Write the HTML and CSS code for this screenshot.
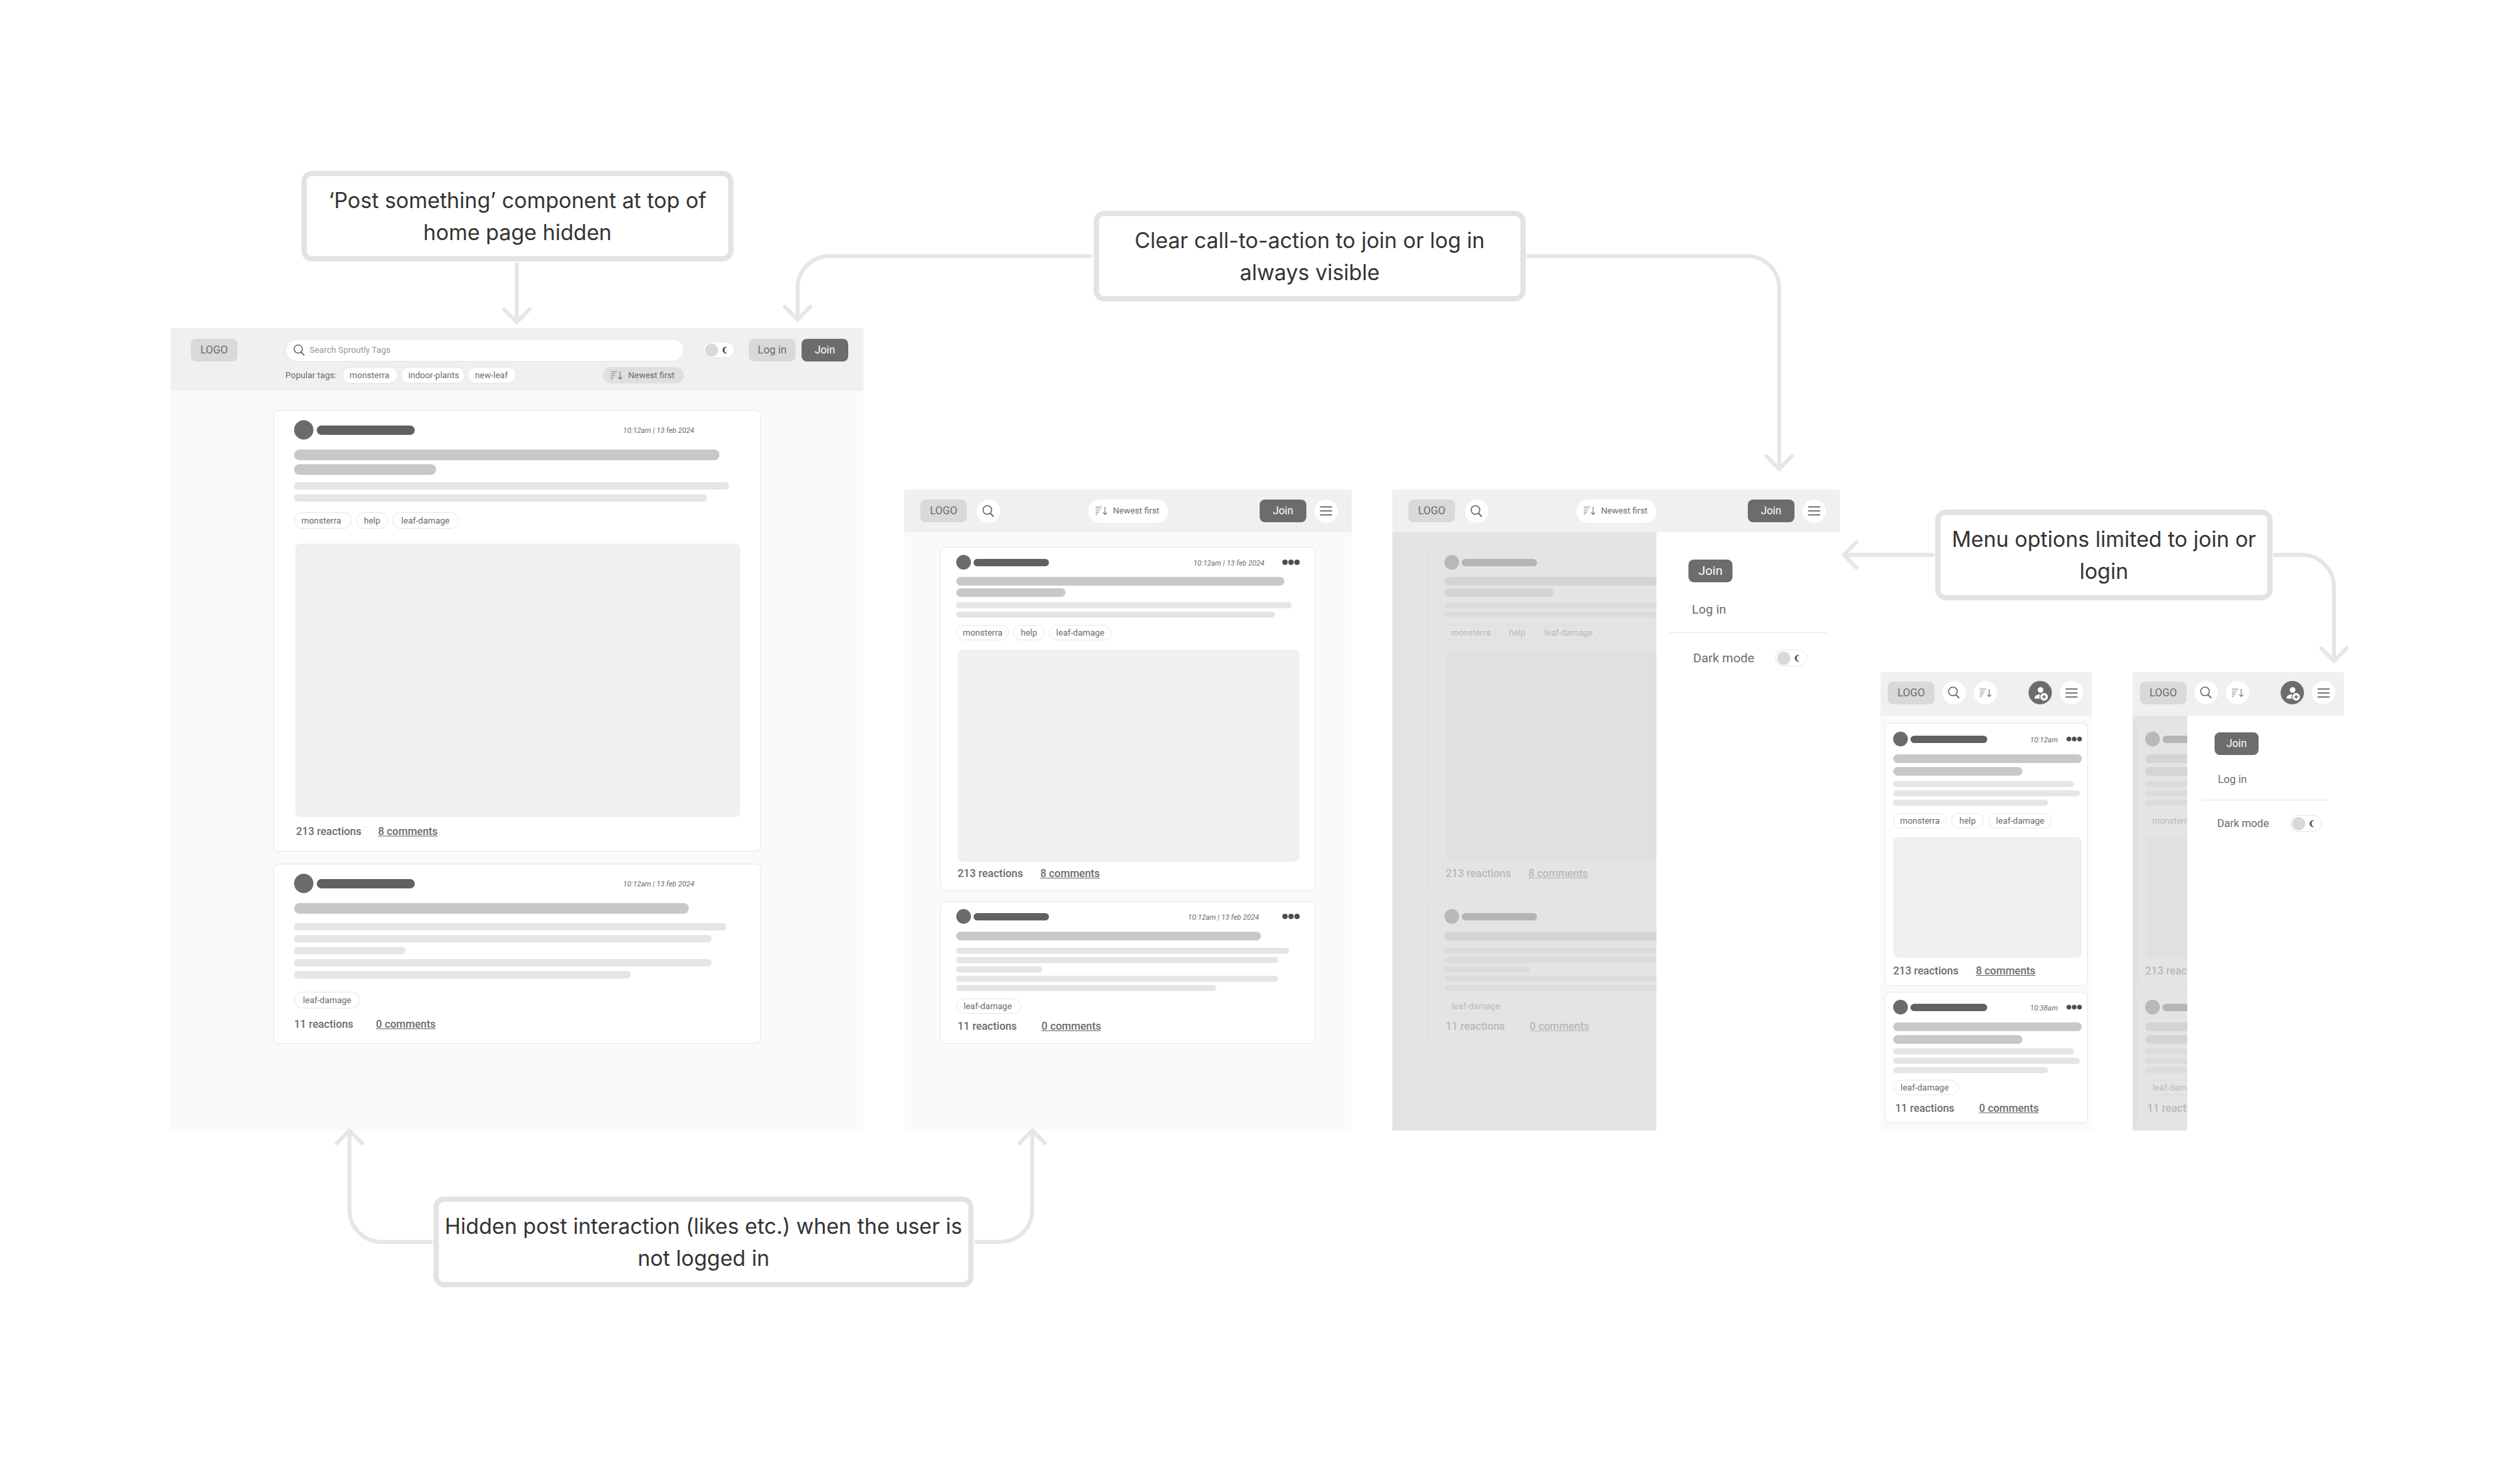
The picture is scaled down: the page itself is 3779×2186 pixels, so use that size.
FILE: index.html
```html
<!DOCTYPE html>
<html lang="en">
<head>
<meta charset="utf-8">
<title>Sproutly wireframes: logged-out views</title>
<link rel="stylesheet" href="styles.css">
</head>
<body>
<svg class="sprite" aria-hidden="true">
  <symbol id="i-search" viewBox="0 0 20 20"><circle cx="8" cy="8" r="6.8" fill="none" stroke="currentColor" stroke-width="1.5"/><path d="M12.8 13.2 18 18.6" fill="none" stroke="currentColor" stroke-width="1.8"/></symbol>
  <symbol id="i-sort" viewBox="0 0 18 14"><path d="M0 1.2H9.500M0 4H7.500M0 6.800H6M0 9.600H4.500M0 12.400H2.500" fill="none" stroke="#9a9a9a" stroke-width="1.2"/><path d="M14 1V12.200M11 9.400 14 12.400 17 9.400" fill="none" stroke="currentColor" stroke-width="1.2"/></symbol>
  <symbol id="i-menu" viewBox="0 0 18 14"><path d="M0 1H18M0 7H18M0 13H18" fill="none" stroke="currentColor" stroke-width="1.500"/></symbol>
  <symbol id="i-moon" viewBox="0 0 8 12"><path d="M7.600 1.200A5.200 5.200 0 1 0 7.600 10.800A4.850 4.850 0 0 1 7.600 1.200Z" fill="currentColor"/></symbol>
  <symbol id="i-dots" viewBox="0 0 26 8"><circle cx="4" cy="4" r="4"/><circle cx="13" cy="4" r="4"/><circle cx="22" cy="4" r="4"/></symbol>
  <symbol id="i-join" viewBox="0 0 24 24"><circle cx="12" cy="7.500" r="4.200" fill="#fff"/><path d="M3.300 20.500V18.500C3.300 15.800 7.500 14 12 14L16 15V20.500Z" fill="#fff"/><circle cx="17.300" cy="17.800" r="7" fill="#6c6c6c"/><circle cx="17.300" cy="17.800" r="5.700" fill="#fff"/><path d="M17.300 15.100V20.500M14.600 17.800H20" stroke="#6c6c6c" stroke-width="1.800"/></symbol>
</svg>

<main class="board">
  <section class="frames">

    <article class="frame desktop">
      <header class="bar">
        <a class="logo" href="#">LOGO</a>
        <div class="find">
          <label class="search"><svg class="ico-search"><use href="#i-search"/></svg><input type="search" placeholder="Search Sproutly Tags" aria-label="Search Sproutly Tags"></label>
          <div class="popular">
            <span>Popular tags:</span>
            <ul class="tags">
              <li class="tag tag-start" style="width:84px">monsterra</li>
              <li class="tag tag-start" style="width:96px">indoor-plants</li>
              <li class="tag tag-start" style="width:73px">new-leaf</li>
            </ul>
            <button class="sort" type="button"><svg class="ico-sort"><use href="#i-sort"/></svg>Newest first</button>
          </div>
        </div>
        <label class="toggle"><input type="checkbox" aria-label="Dark mode"><svg class="ico-moon"><use href="#i-moon"/></svg></label>
        <div class="actions">
          <button class="btn btn-quiet" type="button">Log in</button>
          <button class="btn" type="button">Join</button>
        </div>
      </header>
      <div class="feed">
        <section class="post">
          <div class="head"><i class="avatar"></i><i class="name"></i><time>10:12am | 13 feb 2024</time></div>
          <div class="titles"><i style="width:638px"></i><i style="width:213px"></i></div>
          <div class="lines"><i style="width:652px"></i><i style="width:619px"></i></div>
          <ul class="tags"><li class="tag tag-start" style="width:87px">monsterra</li><li class="tag" style="width:48px">help</li><li class="tag" style="width:100px">leaf-damage</li></ul>
          <div class="photo"></div>
          <div class="stats"><span>213 reactions</span><a href="#">8 comments</a></div>
        </section>
        <section class="post short">
          <div class="head"><i class="avatar"></i><i class="name"></i><time>10:12am | 13 feb 2024</time></div>
          <div class="titles"><i style="width:592px"></i></div>
          <div class="lines"><i style="width:648px"></i><i style="width:626px"></i><i style="width:167px"></i><i style="width:626px"></i><i style="width:505px"></i></div>
          <ul class="tags"><li class="tag" style="width:99px">leaf-damage</li></ul>
          <div class="stats"><span>11 reactions</span><a href="#">0 comments</a></div>
        </section>
      </div>
    </article>

    <article class="frame tablet">
      <header class="bar">
        <a class="logo" href="#">LOGO</a>
        <button class="round" type="button" aria-label="Search"><svg class="ico-search"><use href="#i-search"/></svg></button>
        <button class="sort" type="button"><svg class="ico-sort"><use href="#i-sort"/></svg>Newest first</button>
        <button class="btn" type="button">Join</button>
        <button class="round" type="button" aria-label="Menu"><svg class="ico-menu"><use href="#i-menu"/></svg></button>
      </header>
      <div class="feed">
        <section class="post">
          <div class="head"><i class="avatar"></i><i class="name"></i><time>10:12am | 13 feb 2024</time><svg class="ico-dots"><use href="#i-dots"/></svg></div>
          <div class="titles"><i style="width:492px"></i><i style="width:164px"></i></div>
          <div class="lines"><i style="width:503px"></i><i style="width:478px"></i></div>
          <ul class="tags"><li class="tag" style="width:79px">monsterra</li><li class="tag" style="width:48px">help</li><li class="tag" style="width:94px">leaf-damage</li></ul>
          <div class="photo"></div>
          <div class="stats"><span>213 reactions</span><a href="#">8 comments</a></div>
        </section>
        <section class="post short">
          <div class="head"><i class="avatar"></i><i class="name"></i><time>10:12am | 13 feb 2024</time><svg class="ico-dots"><use href="#i-dots"/></svg></div>
          <div class="titles"><i style="width:457px"></i></div>
          <div class="lines"><i style="width:499px"></i><i style="width:483px"></i><i style="width:129px"></i><i style="width:483px"></i><i style="width:390px"></i></div>
          <ul class="tags"><li class="tag tag-start" style="width:98px">leaf-damage</li></ul>
          <div class="stats"><span>11 reactions</span><a href="#">0 comments</a></div>
        </section>
      </div>
    </article>

    <article class="frame tablet">
      <header class="bar">
        <a class="logo" href="#">LOGO</a>
        <button class="round" type="button" aria-label="Search"><svg class="ico-search"><use href="#i-search"/></svg></button>
        <button class="sort" type="button"><svg class="ico-sort"><use href="#i-sort"/></svg>Newest first</button>
        <button class="btn" type="button">Join</button>
        <button class="round" type="button" aria-label="Menu"><svg class="ico-menu"><use href="#i-menu"/></svg></button>
      </header>
      <div class="feed">
        <section class="post">
          <div class="head"><i class="avatar"></i><i class="name"></i></div>
          <div class="titles"><i style="width:492px"></i><i style="width:164px"></i></div>
          <div class="lines"><i style="width:503px"></i><i style="width:478px"></i></div>
          <ul class="tags"><li class="tag" style="width:79px">monsterra</li><li class="tag" style="width:48px">help</li><li class="tag" style="width:94px">leaf-damage</li></ul>
          <div class="photo"></div>
          <div class="stats"><span>213 reactions</span><a href="#">8 comments</a></div>
        </section>
        <section class="post short">
          <div class="head"><i class="avatar"></i><i class="name"></i></div>
          <div class="titles"><i style="width:457px"></i></div>
          <div class="lines"><i style="width:499px"></i><i style="width:483px"></i><i style="width:129px"></i><i style="width:483px"></i><i style="width:390px"></i></div>
          <ul class="tags"><li class="tag tag-start" style="width:98px">leaf-damage</li></ul>
          <div class="stats"><span>11 reactions</span><a href="#">0 comments</a></div>
        </section>
        <div class="scrim">
          <nav class="drawer">
            <button class="btn" type="button">Join</button>
            <a class="login" href="#">Log in</a>
            <hr>
            <div class="mode"><label for="dark-tablet">Dark mode</label><span class="toggle"><input id="dark-tablet" type="checkbox"><svg class="ico-moon"><use href="#i-moon"/></svg></span></div>
          </nav>
        </div>
      </div>
    </article>

    <article class="frame mobile">
      <header class="bar">
        <a class="logo" href="#">LOGO</a>
        <button class="round" type="button" aria-label="Search"><svg class="ico-search"><use href="#i-search"/></svg></button>
        <button class="round" type="button" aria-label="Sort"><svg class="ico-sort"><use href="#i-sort"/></svg></button>
        <button class="round round-dark" type="button" aria-label="Join"><svg class="ico-join"><use href="#i-join"/></svg></button>
        <button class="round" type="button" aria-label="Menu"><svg class="ico-menu"><use href="#i-menu"/></svg></button>
      </header>
      <div class="feed">
        <section class="post">
          <div class="head"><i class="avatar"></i><i class="name"></i><time>10:12am</time><svg class="ico-dots"><use href="#i-dots"/></svg></div>
          <div class="titles"><i style="width:283px"></i><i style="width:194px"></i></div>
          <div class="lines"><i style="width:271px"></i><i style="width:280px"></i><i style="width:232px"></i></div>
          <ul class="tags"><li class="tag" style="width:80px">monsterra</li><li class="tag" style="width:49px">help</li><li class="tag" style="width:95px">leaf-damage</li></ul>
          <div class="photo"></div>
          <div class="stats"><span>213 reactions</span><a href="#">8 comments</a></div>
        </section>
        <section class="post short">
          <div class="head"><i class="avatar"></i><i class="name"></i><time>10:38am</time><svg class="ico-dots"><use href="#i-dots"/></svg></div>
          <div class="titles"><i style="width:283px"></i><i style="width:194px"></i></div>
          <div class="lines"><i style="width:271px"></i><i style="width:280px"></i><i style="width:232px"></i></div>
          <ul class="tags"><li class="tag tag-start" style="width:98px">leaf-damage</li></ul>
          <div class="stats"><span>11 reactions</span><a href="#">0 comments</a></div>
        </section>
      </div>
    </article>

    <article class="frame mobile">
      <header class="bar">
        <a class="logo" href="#">LOGO</a>
        <button class="round" type="button" aria-label="Search"><svg class="ico-search"><use href="#i-search"/></svg></button>
        <button class="round" type="button" aria-label="Sort"><svg class="ico-sort"><use href="#i-sort"/></svg></button>
        <button class="round round-dark" type="button" aria-label="Join"><svg class="ico-join"><use href="#i-join"/></svg></button>
        <button class="round" type="button" aria-label="Menu"><svg class="ico-menu"><use href="#i-menu"/></svg></button>
      </header>
      <div class="feed">
        <section class="post">
          <div class="head"><i class="avatar"></i><i class="name"></i></div>
          <div class="titles"><i style="width:283px"></i><i style="width:194px"></i></div>
          <div class="lines"><i style="width:271px"></i><i style="width:280px"></i><i style="width:232px"></i></div>
          <ul class="tags"><li class="tag" style="width:80px">monsterra</li></ul>
          <div class="photo"></div>
          <div class="stats"><span>213 reactions</span></div>
        </section>
        <section class="post short">
          <div class="head"><i class="avatar"></i><i class="name"></i></div>
          <div class="titles"><i style="width:283px"></i><i style="width:194px"></i></div>
          <div class="lines"><i style="width:271px"></i><i style="width:280px"></i><i style="width:232px"></i></div>
          <ul class="tags"><li class="tag tag-start" style="width:98px">leaf-damage</li></ul>
          <div class="stats"><span>11 reactions</span></div>
        </section>
        <div class="scrim">
          <nav class="drawer">
            <button class="btn" type="button">Join</button>
            <a class="login" href="#">Log in</a>
            <hr>
            <div class="mode"><label for="dark-mobile">Dark mode</label><span class="toggle"><input id="dark-mobile" type="checkbox"><svg class="ico-moon"><use href="#i-moon"/></svg></span></div>
          </nav>
        </div>
      </div>
    </article>
  </section>

  <svg class="arrows" aria-hidden="true">
    <path d="M775 396V480"/><path class="tip" d="M756 464 775 483 794 464"/>
    <path d="M1635 384H1244A48 48 0 0 0 1196 432V476"/><path class="tip" d="M1177 460 1196 479 1215 460"/>
    <path d="M2292 384H2620A48 48 0 0 1 2668 432V700"/><path class="tip" d="M2649 684 2668 703 2687 684"/>
    <path d="M2898 832H2768"/><path class="tip" d="M2784 813 2765 832 2784 851"/>
    <path d="M3412 832H3452A48 48 0 0 1 3500 880V988"/><path class="tip" d="M3481 972 3500 991 3519 972"/>
    <path d="M646 1862H572A48 48 0 0 1 524 1814V1698"/><path class="tip" d="M505 1714 524 1695 543 1714"/>
    <path d="M1464 1862H1500A48 48 0 0 0 1548 1814V1698"/><path class="tip" d="M1529 1714 1548 1695 1567 1714"/>
  </svg>

  <p class="note note-post">‘Post something’ component at top of home page hidden</p>
  <p class="note note-cta">Clear call-to-action to join or log in always visible</p>
  <p class="note note-menu">Menu options limited to join or login</p>
  <p class="note note-likes">Hidden post interaction (likes etc.) when the user is not logged in</p>
</main>
</body>
</html>
```
FILE: styles.css
```css
*, *::before, *::after { box-sizing: border-box; }
body { margin: 0; background: #fff; color: #6b6b6b; font: 16px/24px Roboto, sans-serif; }
ul { list-style: none; margin: 0; padding: 0; }
a { color: inherit; text-decoration: none; }
i { display: block; font-style: normal; }
button, input { font: inherit; color: inherit; margin: 0; padding: 0; border: 0; background: none; }
svg { display: block; flex: none; }
.sprite { position: absolute; width: 0; height: 0; }

/* Board: screens in a row, annotations placed freely on top */
.board { position: relative; min-height: 100vh; overflow: hidden; }
.frames { display: flex; align-items: flex-end; gap: 61px; padding: 492px 256px 0; }
.frame { flex: none; background: #fafafa; }
.arrows { position: absolute; inset: 0; width: 100%; height: 100%; fill: none; stroke: #e6e6e6; stroke-width: 6; stroke-linecap: round; }
.arrows .tip { stroke-linejoin: miter; }
.note { position: absolute; width: 648px; margin: 0; padding: 13px 8px 11px; border: 8px solid #e3e3e3; border-radius: 16px; background: #fff; color: #333; font: 32px/48px Inter, sans-serif; text-align: center; }
.note-post { left: 452px; top: 256px; }
.note-cta { left: 1640px; top: 316px; }
.note-menu { left: 2902px; top: 764px; width: 506px; }
.note-likes { left: 650px; top: 1794px; width: 810px; }

/* Screen sizes */
.desktop {
  width: 1039px; --card: 731px; --top: 29px; --end: 130px; --between: 18px;
  --pad: 14px 30px 17px; --avatar: 29px; --name: 147px; --name-h: 14px; --name-gap: 5px;
  --title-h: 16px; --title-gap: 6px; --line-h: 11px; --line-gap: 7px; --tag-h: 25px; --tag-gap: 6px;
  --to-title: 15px; --to-lines: 11px; --to-tags: 16px; --to-photo: 22px; --to-stats: 10px;
  --photo: 410px; --photo-in: 2px; --stats-in: 3px; --stats-gap: 25px;
}
.desktop .short { --pad: 14px 30px 16px; --to-lines: 14px; --to-tags: 20px; --to-stats: 12px; --stats-in: 0px; --stats-gap: 34px; }
.tablet {
  width: 671px; --card: 563px; --top: 22px; --end: 130px; --between: 15px;
  --pad: 11px 23px 13px; --avatar: 22px; --name: 113px; --name-h: 11px; --name-gap: 4px;
  --title-h: 13px; --title-gap: 4px; --line-h: 9px; --line-gap: 5px; --tag-h: 23px; --tag-gap: 6px;
  --to-title: 11px; --to-lines: 8px; --to-tags: 11px; --to-photo: 14px; --to-stats: 6px;
  --photo: 318px; --photo-in: 2px; --stats-in: 2px; --stats-gap: 26px; --dots: 26px; --dots-gap: 27px;
}
.tablet .short { --to-title: 12px; --to-lines: 11px; --to-stats: 7px; --stats-gap: 37px; --dots-gap: 35px; }
.mobile {
  width: 317px; --card: 305px; --top: 11px; --end: 11px; --between: 9px;
  --pad: 12px 8px 9px 12px; --avatar: 22px; --name: 115px; --name-h: 11px; --name-gap: 4px;
  --title-h: 13px; --title-gap: 6px; --line-h: 9px; --line-gap: 5px; --tag-h: 23px; --tag-gap: 7px;
  --to-title: 12px; --to-lines: 8px; --to-tags: 11px; --to-photo: 13px; --to-stats: 8px;
  --photo: 181px; --photo-in: 0px; --stats-in: 0px; --stats-gap: 26px; --dots: 23px; --dots-gap: 13px;
}
.mobile .short { --pad: 11px 8px 9px 12px; --to-lines: 7px; --to-tags: 10px; --stats-in: 3px; --stats-gap: 37px; }

/* Top bar */
.bar { display: flex; align-items: center; background: #f0f0f0; }
.logo, .btn { flex: none; width: 70px; height: 34px; border-radius: 8px; line-height: 34px; text-align: center; }
.logo { background: #d9d9d9; }
.btn { background: #6c6c6c; color: #fff; }
.btn-quiet { background: #d9d9d9; color: #6b6b6b; }
.desktop .bar { align-items: flex-start; height: 94px; padding: 16px 22px 0 30px; }
.find { width: 598px; margin: 0 28px 0 72px; }
.search { display: flex; align-items: center; gap: 6px; height: 34px; padding: 0 11px; border: 1px solid #e5e5e5; border-radius: 17px; background: #fff; }
.search input { flex: 1; outline: 0; font-size: 13px; }
.search input::placeholder { color: #999; opacity: 1; }
.search .ico-search { width: 18px; height: 18px; }
.popular { display: flex; align-items: center; gap: 9px; margin-top: 8px; font-size: 13px; }
.popular .tags { gap: 4px; }
.actions { display: flex; gap: 9px; margin-left: 21px; }
.desktop .bar .toggle { margin-top: 4px; }
.sort { display: flex; align-items: center; gap: 8px; width: 120px; height: 35px; padding: 0 11px; border-radius: 18px; background: #fff; font-size: 13px; white-space: nowrap; }
.popular .sort { width: 122px; height: 25px; margin-left: auto; border: 1px solid #e3e3e3; background: #dfdfdf; }
.tablet .bar { height: 64px; padding: 0 21px 0 24px; }
.tablet .bar .round:first-of-type { margin-left: 15px; }
.tablet .bar .sort { margin: 0 auto 0 132px; }
.tablet .bar .btn { margin-right: 12px; }
.mobile .bar { gap: 12px; height: 65px; padding: 0 13px 4px 11px; }
.mobile .round-dark { margin-left: auto; }
.round { display: grid; place-items: center; flex: none; width: 35px; height: 35px; border-radius: 50%; background: #fff; }
.round-dark { background: #6c6c6c; }
.ico-search { width: 19px; height: 19px; color: #555; }
.ico-sort { width: 18px; height: 14px; color: #777; }
.ico-menu { width: 19px; height: 14px; color: #4d4d4d; }
.ico-join { width: 24px; height: 24px; }
.ico-moon { width: 8px; height: 12px; color: #555; }
.toggle { display: flex; align-items: center; justify-content: space-between; flex: none; width: 48px; height: 25px; padding: 0 10px 0 2px; border: 1px solid #e3e3e3; border-radius: 13px; background: #fff; }
.toggle input { appearance: none; width: 20px; height: 20px; border-radius: 50%; background: #d9d9d9; }

/* Feed */
.feed { position: relative; display: flex; flex-direction: column; align-items: center; gap: var(--between); padding: var(--top) 0 var(--end); }
.post { width: var(--card); padding: var(--pad); border: 1px solid #e6e6e6; border-radius: 8px; background: #fff; }
.head { display: flex; align-items: center; height: var(--avatar); }
.avatar { width: var(--avatar); height: var(--avatar); border-radius: 50%; background: #6b6b6b; }
.name { width: var(--name); height: var(--name-h); margin-left: var(--name-gap); border-radius: 7px; background: #616161; }
.head time { margin-left: auto; padding-top: 3px; font-size: 11px; line-height: 16px; font-style: italic; white-space: nowrap; }
.desktop time { margin-right: 69px; }
.ico-dots { width: var(--dots); height: 8px; margin-left: var(--dots-gap); fill: #4d4d4d; }
.titles, .lines { display: flex; flex-direction: column; }
.titles { gap: var(--title-gap); margin-top: var(--to-title); }
.titles i { height: var(--title-h); border-radius: 8px; background: #c8c8c8; }
.lines { gap: var(--line-gap); margin-top: var(--to-lines); }
.lines i { height: var(--line-h); border-radius: 5px; background: #e5e5e5; }
.tags { display: flex; gap: var(--tag-gap); }
.post .tags { margin-top: var(--to-tags); }
.tag { display: flex; align-items: center; justify-content: center; height: var(--tag-h); border: 1px solid #e6e6e6; border-radius: 13px; background: #fff; font-size: 13px; }
.tag-start { justify-content: flex-start; padding-left: 10px; }
.photo { height: var(--photo); margin: var(--to-photo) 0 0 var(--photo-in); border-radius: 8px; background: #f0f0f0; }
.stats { display: flex; gap: var(--stats-gap); margin: var(--to-stats) 0 0 var(--stats-in); font-weight: 500; }
.stats a { text-decoration: underline; }

/* Open menu over a dimmed feed */
.scrim { position: absolute; inset: 0; display: flex; justify-content: flex-end; background: rgb(217 217 217 / 70%); }
.drawer { width: 275px; padding: 41px 20px 0; background: #fff; font-size: 19px; }
.drawer .btn { display: block; width: 66px; margin-left: 28px; }
.login { display: block; width: max-content; margin: 29px 0 0 33px; }
.drawer hr { height: 1px; margin: 22px 0 0; border: 0; background: #e3e3e3; }
.mode { display: flex; align-items: center; justify-content: space-between; margin: 25px 29px 0 35px; }
.mobile .drawer { width: 235px; padding: 25px 23px 0; font-size: 16px; }
.mobile .drawer .btn { margin-left: 18px; }
.mobile .login { margin: 25px 0 0 23px; }
.mobile .drawer hr { margin-top: 18px; }
.mobile .mode { margin: 22px 10px 0 22px; }
```
